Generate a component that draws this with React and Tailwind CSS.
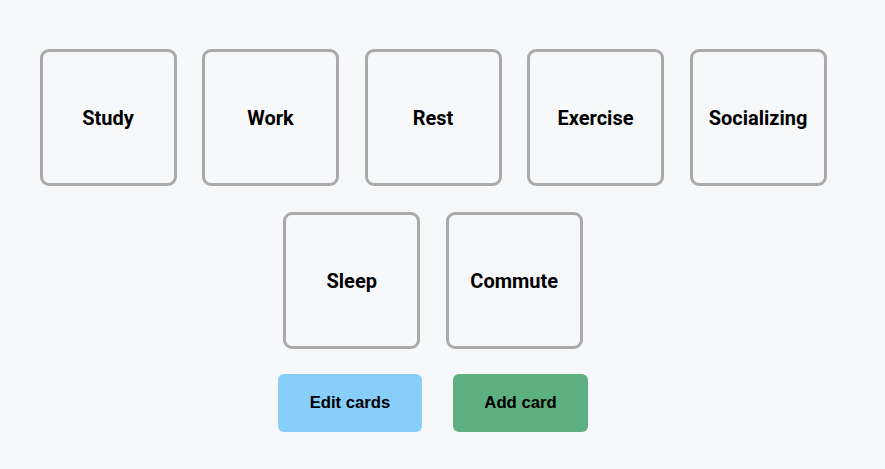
const cards = ["Study", "Work", "Rest", "Exercise", "Socializing", "Sleep", "Commute"];

export default function App() {
  return (
    <div className="min-h-[469px] w-full bg-[#f7f8fa] pt-[49px] pr-[19px]">
      <div className="mx-auto flex w-[800px] flex-wrap justify-center gap-x-[25.5px] gap-y-[26px]">
        {cards.map((c) => (
          <div
            key={c}
            className="flex h-[137px] w-[137px] items-center justify-center rounded-[9px] border-[3px] border-[#aaaaaa] font-['Roboto',sans-serif] text-[20px] font-bold text-black"
          >
            {c}
          </div>
        ))}
      </div>
      <div className="mt-[25px] flex justify-center gap-[31px] font-['Liberation_Sans',Arial,sans-serif] text-[16.7px] font-bold text-black">
        <button className="h-[58px] w-[144px] rounded-[6px] bg-[#87cefa]">Edit cards</button>
        <button className="h-[58px] w-[135px] rounded-[6px] bg-[#5db07f]">Add card</button>
      </div>
    </div>
  );
}
